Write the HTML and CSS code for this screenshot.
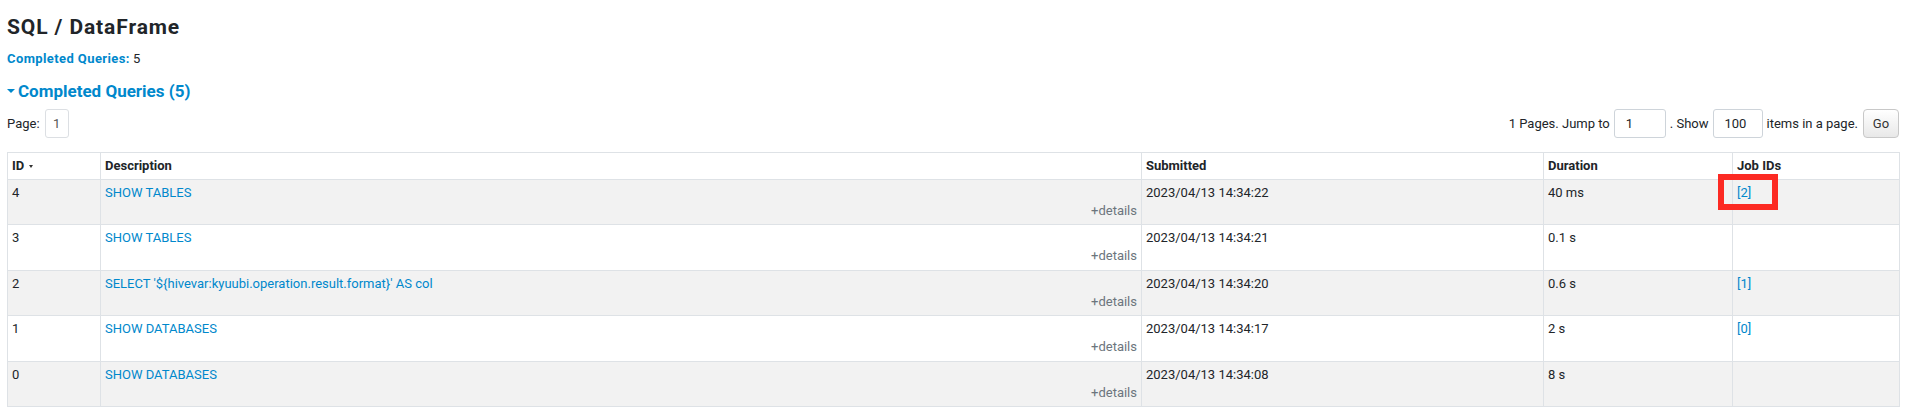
FILE: index.html
```html
<!DOCTYPE html>
<html>
<head>
<meta charset="utf-8">
<title>SQL / DataFrame</title>
<link rel="stylesheet" href="styles.css">
</head>
<body>
<div class="page">
  <h3 class="title">SQL / DataFrame</h3>
  <div class="summary"><span class="summary-label">Completed Queries:</span> 5</div>
  <h4 class="section"><span class="arrow-open"></span>Completed Queries (5)</h4>
  <div class="pager">
    <div class="pager-left">
      <span>Page:</span>
      <span class="page-box">1</span>
    </div>
    <div class="pager-right">
      <span>1 Pages. Jump to</span>
      <span class="input w52">1</span>
      <span>. Show</span>
      <span class="input w50">100</span>
      <span>items in a page.</span>
      <span class="btn">Go</span>
    </div>
  </div>
  <table class="queries">
    <colgroup>
      <col class="c-id"><col class="c-desc"><col class="c-sub"><col class="c-dur"><col class="c-job">
    </colgroup>
    <thead>
      <tr>
        <th>ID<span class="sort-arrow"></span></th>
        <th>Description</th>
        <th>Submitted</th>
        <th>Duration</th>
        <th>Job IDs</th>
      </tr>
    </thead>
    <tbody>
      <tr class="odd">
        <td>4</td>
        <td><a class="link">SHOW TABLES</a><div class="details">+details</div></td>
        <td>2023/04/13 14:34:22</td>
        <td>40 ms</td>
        <td><span class="marked"><a class="link">[2]</a></span></td>
      </tr>
      <tr>
        <td>3</td>
        <td><a class="link">SHOW TABLES</a><div class="details">+details</div></td>
        <td>2023/04/13 14:34:21</td>
        <td>0.1 s</td>
        <td></td>
      </tr>
      <tr class="odd">
        <td>2</td>
        <td><a class="link">SELECT '${hivevar:kyuubi.operation.result.format}' AS col</a><div class="details">+details</div></td>
        <td>2023/04/13 14:34:20</td>
        <td>0.6 s</td>
        <td><a class="link">[1]</a></td>
      </tr>
      <tr>
        <td>1</td>
        <td><a class="link">SHOW DATABASES</a><div class="details">+details</div></td>
        <td>2023/04/13 14:34:17</td>
        <td>2 s</td>
        <td><a class="link">[0]</a></td>
      </tr>
      <tr class="odd">
        <td>0</td>
        <td><a class="link">SHOW DATABASES</a><div class="details">+details</div></td>
        <td>2023/04/13 14:34:08</td>
        <td>8 s</td>
        <td></td>
      </tr>
    </tbody>
  </table>
</div>
</body>
</html>
```
FILE: styles.css
```css
html, body {
  margin: 0;
  padding: 0;
  background: #ffffff;
}
body {
  font-family: Roboto, "Liberation Sans", Arial, sans-serif;
  font-size: 13px;
  line-height: 19px;
  color: #212529;
}
.page {
  padding: 15px 11px 0 7px;
}
.title {
  margin: 0;
  font-size: 21px;
  line-height: 24px;
  font-weight: 700;
  letter-spacing: 0.9px;
  color: #212529;
}
.summary {
  margin-top: 10px;
  line-height: 19px;
}
.summary-label {
  color: #0088cc;
  font-weight: 700;
  letter-spacing: 0.4px;
}
.section {
  margin: 12px 0 0 0;
  font-size: 17px;
  line-height: 22px;
  font-weight: 700;
  color: #0088cc;
  display: flex;
  align-items: center;
}
.arrow-open {
  display: inline-block;
  width: 0;
  height: 0;
  border-left: 4px solid transparent;
  border-right: 4px solid transparent;
  border-top: 4px solid #0088cc;
  margin-right: 3px;
}
.pager {
  margin-top: 7px;
  display: flex;
  justify-content: space-between;
  align-items: center;
}
.pager-left, .pager-right {
  display: flex;
  align-items: center;
}
.pager-left {
  gap: 5px;
}
.pager-right {
  gap: 4px;
}
.page-box {
  display: inline-flex;
  align-items: center;
  justify-content: center;
  width: 24px;
  height: 29px;
  box-sizing: border-box;
  border: 1px solid #dcdfe3;
  border-radius: 3px;
  color: #555;
}
.input {
  display: inline-flex;
  align-items: center;
  height: 29px;
  box-sizing: border-box;
  border: 1px solid #ced4da;
  border-radius: 3px;
  padding-left: 11px;
  color: #212529;
}
.w52 { width: 52px; }
.w50 { width: 50px; }
.btn {
  display: inline-flex;
  align-items: center;
  justify-content: center;
  width: 36px;
  height: 29px;
  box-sizing: border-box;
  border: 1px solid #c8c8c8;
  border-radius: 4px;
  background: linear-gradient(#ffffff, #e8e8e8);
  color: #333;
  margin-left: 1px;
}
.queries {
  width: 100%;
  table-layout: fixed;
  border-collapse: collapse;
  margin-top: 14px;
}
.c-id { width: 93px; }
.c-desc { width: 1041px; }
.c-sub { width: 402px; }
.c-dur { width: 189px; }
.c-job { width: 167px; }
.queries th, .queries td {
  border: 1px solid #dee2e6;
  padding: 4px;
  text-align: left;
  vertical-align: top;
}
.queries th {
  font-weight: 700;
  line-height: 18px;
  color: #212529;
}
.queries td {
  line-height: 18px;
}
.queries tr.odd td {
  background: #f2f2f2;
}
.sort-arrow {
  display: inline-block;
  width: 0;
  height: 0;
  border-left: 2px solid transparent;
  border-right: 2px solid transparent;
  border-top: 3px solid #333;
  margin-left: 5px;
  vertical-align: 2px;
}
.link {
  color: #0088cc;
  text-decoration: none;
}
.details {
  text-align: right;
  color: #6c757d;
  line-height: 18.4px;
}
.marked {
  position: relative;
  display: inline-block;
}
.marked::after {
  content: "";
  position: absolute;
  left: -19px;
  top: -10px;
  width: 60px;
  height: 36px;
  box-sizing: border-box;
  border: 6px solid #fc2a23;
}
```
